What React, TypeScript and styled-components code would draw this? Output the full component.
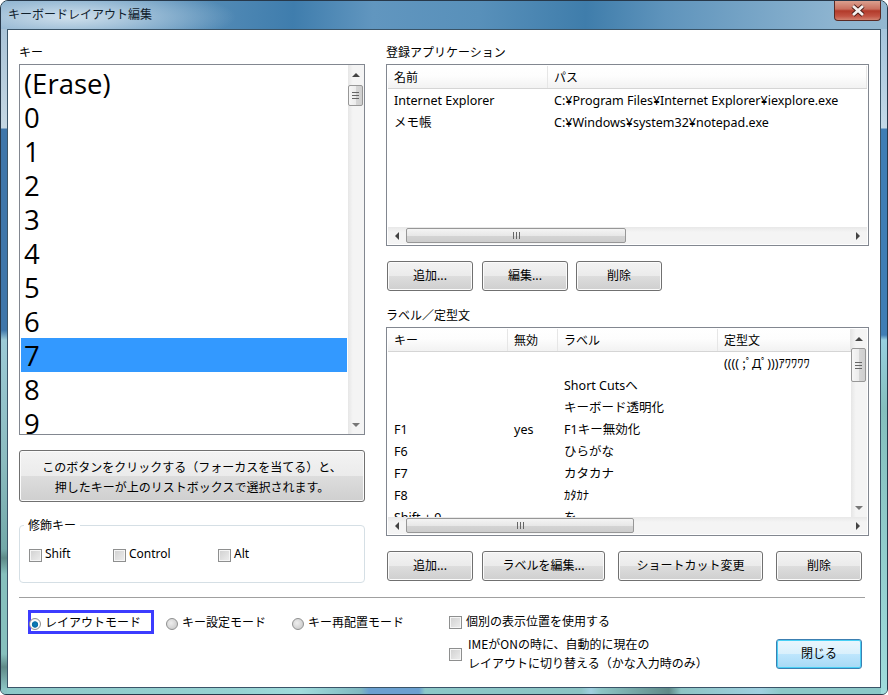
import * as React from 'react';
import styled, { createGlobalStyle, css } from 'styled-components';

const GlobalStyle = createGlobalStyle`
  html, body {
    margin: 0;
    padding: 0;
    background: #fff;
  }
  body {
    font-family: "Noto Sans", "Noto Sans CJK JP", sans-serif;
    font-size: 12px;
    color: #000;
  }
`;

const UI_FONT = `"Noto Sans CJK JP", "Noto Sans", sans-serif`;

const WindowFrame = styled.div`
  box-sizing: border-box;
  width: 888px;
  height: 695px;
  display: flex;
  flex-direction: column;
  overflow: hidden;
  border: 1px solid #27384a;
  border-radius: 8px 8px 6px 6px;
  background: #8cc8c8;
`;

const TitleBar = styled.div`
  flex: none;
  height: 28px;
  display: flex;
  align-items: flex-start;
  justify-content: space-between;
  background:
    radial-gradient(ellipse 165px 30px at 70px 16px, rgba(225, 236, 244, 0.85) 0%, rgba(175, 203, 224, 0.6) 55%, rgba(120, 165, 200, 0) 100%),
    linear-gradient(92deg, #7ea6c6 0%, #5f93bb 18%, #3f7dad 33%, #6196bf 42%, #5890ba 54%, #3f7dab 66%, #5f94bc 75%, #8db4d0 94%, #93b7d0 100%);
`;

const TitleText = styled.div`
  padding: 4px 0 0 7px;
  font-family: ${UI_FONT};
  font-size: 12px;
  line-height: 17px;
  color: #10202c;
`;

const CloseButton = styled.div`
  width: 47px;
  height: 20px;
  margin-right: 6px;
  box-sizing: border-box;
  display: flex;
  align-items: center;
  justify-content: center;
  border: 1px solid #5a2a24;
  border-top: none;
  border-radius: 0 0 4px 4px;
  background: linear-gradient(180deg, #dba08f 0%, #c9705f 42%, #b23a2a 52%, #c25444 80%, #d2826f 100%);
`;

const FrameBody = styled.div`
  flex: 1;
  display: flex;
  padding: 0 6px 6px;
  background:
    linear-gradient(180deg, #aac4d8 0, #c5d7e3 99px, #3f76aa 100px, #3f76aa 301px, #9ccad6 311px, #8cbcc0 430px, #73a9a9 520px, #5d8a88 529px, #86c0bd 545px, #86c0bd 625px, #5f8a88 638px, #8cc4c4 660px) left top / 6px 100% no-repeat,
    linear-gradient(180deg, #a5c5dc 0, #c3d9e8 99px, #3f7db5 100px, #3f7db5 306px, #97cfe0 311px, #84bfbd 380px, #9fdbdc 665px) right top / 6px 100% no-repeat,
    linear-gradient(90deg, #8cc8c8 0, #96d2d2 230px, #a0dcdc 300px, #7fb8c0 360px, #6ba0d0 368px, #6ba0d0 418px, #8cc8c8 424px, #8cc4c4 580px, #a0cfe0 590px, #8cc4c4 600px, #5f8a88 668px, #8cc4c4 680px, #a0d0e0 760px, #8cc8c8 780px) left bottom / 100% 6px no-repeat;
`;

const Client = styled.div`
  flex: 1;
  box-sizing: border-box;
  padding: 0 11px;
  background: #fff;
  border: 1px solid #3a5468;
`;

const Columns = styled.div`
  display: grid;
  grid-template-columns: 346px 483px;
  column-gap: 21px;
`;

const Column = styled.div`
  display: flex;
  flex-direction: column;
`;

const FieldLabel = styled.div<{ $top?: number }>`
  margin-top: ${(p) => p.$top ?? 15}px;
  margin-bottom: 5px;
  font-family: ${UI_FONT};
  font-size: 12px;
  line-height: 14px;
  height: 14px;
`;

const KeyList = styled.div`
  box-sizing: border-box;
  height: 371px;
  display: flex;
  border: 1px solid #828790;
`;

const KeyItems = styled.div`
  flex: 1;
  min-width: 0;
  overflow: hidden;
  padding: 1px 1px 0 1px;
`;

const KeyItem = styled.div<{ $selected?: boolean }>`
  height: 34px;
  padding-left: 3px;
  font-family: "Open Sans", "Noto Sans", sans-serif;
  font-size: 27.5px;
  line-height: 36px;
  background: ${(p) => (p.$selected ? '#3399ff' : 'transparent')};
`;

const ScrollV = styled.div`
  flex: none;
  width: 16px;
  display: flex;
  flex-direction: column;
  background: linear-gradient(90deg, #e6e6e6 0%, #f4f4f4 30%, #f4f4f4 100%);
`;

const ScrollH = styled.div`
  flex: none;
  height: 17px;
  display: flex;
  align-items: stretch;
  background: linear-gradient(180deg, #e8e8e8 0%, #f4f4f4 30%, #f4f4f4 100%);
`;

const ScrollArrow = styled.div<{ $dir: 'up' | 'down' | 'left' | 'right' }>`
  flex: none;
  display: flex;
  align-items: center;
  justify-content: center;
  ${(p) => (p.$dir === 'up' || p.$dir === 'down' ? 'height: 19px;' : 'width: 18px;')}

  &::before {
    content: '';
    width: 0;
    height: 0;
    ${(p) =>
      p.$dir === 'up' &&
      css`
        border-left: 4px solid transparent;
        border-right: 4px solid transparent;
        border-bottom: 4px solid #444;
      `}
    ${(p) =>
      p.$dir === 'down' &&
      css`
        border-left: 4px solid transparent;
        border-right: 4px solid transparent;
        border-top: 4px solid #777;
      `}
    ${(p) =>
      p.$dir === 'left' &&
      css`
        border-top: 4px solid transparent;
        border-bottom: 4px solid transparent;
        border-right: 4px solid #444;
      `}
    ${(p) =>
      p.$dir === 'right' &&
      css`
        border-top: 4px solid transparent;
        border-bottom: 4px solid transparent;
        border-left: 4px solid #444;
      `}
  }
`;

const ScrollTrack = styled.div`
  flex: 1;
  min-width: 0;
  min-height: 0;
  display: flex;
`;

const ThumbOffsetV = styled.div<{ $offset: number }>`
  padding-top: ${(p) => p.$offset}px;
`;

const ThumbV = styled.div<{ $size: number }>`
  box-sizing: border-box;
  width: 15px;
  height: ${(p) => p.$size}px;
  display: flex;
  align-items: center;
  justify-content: center;
  border: 1px solid #979797;
  border-radius: 2px;
  background: linear-gradient(90deg, #f6f6f6 0%, #ececec 50%, #d6d6d6 52%, #cfcfcf 100%);
`;

const ThumbH = styled.div<{ $size: number }>`
  box-sizing: border-box;
  width: ${(p) => p.$size}px;
  margin: 1px 0;
  display: flex;
  align-items: center;
  justify-content: center;
  border: 1px solid #979797;
  border-radius: 2px;
  background: linear-gradient(180deg, #f4f4f4 0%, #e8e8e8 50%, #d4d4d4 52%, #cdcdcd 100%);
`;

const GripV = styled.div`
  width: 7px;
  height: 7px;
  background: repeating-linear-gradient(180deg, #666 0, #666 1px, transparent 1px, transparent 3px);
`;

const GripH = styled.div`
  width: 7px;
  height: 7px;
  background: repeating-linear-gradient(90deg, #666 0, #666 1px, transparent 1px, transparent 3px);
`;

const HintButton = styled.div`
  box-sizing: border-box;
  height: 52px;
  margin-top: 15px;
  padding-top: 1px;
  display: flex;
  flex-direction: column;
  align-items: center;
  justify-content: center;
  font-family: ${UI_FONT};
  font-size: 12px;
  line-height: 20px;
  border: 1px solid #707070;
  border-radius: 3px;
  background: linear-gradient(180deg, #f3f3f3 0%, #ebebeb 49%, #dddddd 50%, #cfcfcf 100%);
  box-shadow: inset 0 0 0 1px #fbfbfb;
`;

const GroupBox = styled.fieldset`
  box-sizing: border-box;
  height: 65px;
  margin: 16px 0 0 0;
  padding: 0 0 0 9px;
  border: 1px solid #d5dfe5;
  border-radius: 4px;
  min-width: 0;
`;

const GroupLegend = styled.legend`
  margin-left: -5px;
  padding: 0 4px;
  font-family: ${UI_FONT};
  font-size: 12px;
  line-height: 14px;
`;

const ModifierRow = styled.div`
  display: grid;
  grid-template-columns: 84px 105px 80px;
  padding-top: 14px;
`;

const CheckLabel = styled.label<{ $gap?: number }>`
  display: flex;
  align-items: center;
  gap: ${(p) => p.$gap ?? 4}px;
  font-family: "Noto Sans", "Noto Sans CJK JP", sans-serif;
  font-size: 12px;
  line-height: 16px;
`;

const CheckBox = styled.span`
  flex: none;
  box-sizing: border-box;
  width: 13px;
  height: 13px;
  margin-top: 2px;
  border: 1px solid #8e8f8f;
  background: linear-gradient(135deg, #d0d0d0 0%, #eeeeee 100%);
  box-shadow: inset 0 0 0 1px #f6f6f6;
`;

const ListView = styled.div<{ $height: number }>`
  box-sizing: border-box;
  height: ${(p) => p.$height}px;
  padding: 1px;
  display: flex;
  flex-direction: column;
  border: 1px solid #828790;
`;

const ListMain = styled.div`
  flex: 1;
  min-height: 0;
  display: flex;
`;

const ListBody = styled.div`
  flex: 1;
  min-width: 0;
  overflow: hidden;
`;

const ListHeader = styled.div`
  height: 22px;
  display: flex;
  border-bottom: 1px solid #d5d5d5;
  background: linear-gradient(180deg, #ffffff 0%, #fdfdfd 45%, #f2f2f2 100%);
`;

const HeaderCell = styled.div<{ $width?: number }>`
  box-sizing: border-box;
  ${(p) => (p.$width ? `width: ${p.$width}px; flex: none;` : 'flex: 1;')}
  padding-left: 6px;
  font-family: ${UI_FONT};
  font-size: 12px;
  line-height: 22px;
  border-right: 1px solid #e6e6e6;
`;

const ListRow = styled.div`
  height: 22px;
  display: flex;
`;

const RowCell = styled.div<{ $width?: number }>`
  box-sizing: border-box;
  ${(p) => (p.$width ? `width: ${p.$width}px; flex: none;` : 'flex: 1;')}
  padding-left: 6px;
  font-family: "Noto Sans", "Noto Sans CJK JP", sans-serif;
  font-size: 12.5px;
  line-height: 24px;
  white-space: nowrap;
`;

const ButtonRow = styled.div`
  display: flex;
  margin-top: 15px;
  padding-left: 1px;
`;

const PushButton = styled.div<{ $width: number; $gap?: number; $default?: boolean }>`
  box-sizing: border-box;
  flex: none;
  width: ${(p) => p.$width}px;
  height: 30px;
  margin-right: ${(p) => p.$gap ?? 0}px;
  padding-bottom: 2px;
  display: flex;
  align-items: center;
  justify-content: center;
  font-family: ${UI_FONT};
  font-size: 12px;
  line-height: 14px;
  border-radius: 3px;
  ${(p) =>
    p.$default
      ? css`
          border: 1px solid #3c7fb1;
          background: linear-gradient(180deg, #eaf6fd 0%, #d9f0fc 49%, #bee6fd 50%, #a7d9f5 100%);
          box-shadow: inset 0 0 0 1px #48d0f5;
        `
      : css`
          border: 1px solid #707070;
          background: linear-gradient(180deg, #f3f3f3 0%, #ebebeb 49%, #dddddd 50%, #cfcfcf 100%);
          box-shadow: inset 0 0 0 1px #fbfbfb;
        `}
`;

const Separator = styled.div`
  width: 846px;
  height: 1px;
  margin-top: 14px;
  background: #a0a0a0;
`;

const Footer = styled.div`
  display: flex;
  align-items: flex-start;
  margin-top: 12px;
  padding-left: 9px;
`;

const RadioItem = styled.label<{ $width: number; $focused?: boolean }>`
  box-sizing: border-box;
  flex: none;
  width: ${(p) => p.$width}px;
  height: 24px;
  margin-right: 12px;
  padding-bottom: 1px;
  display: flex;
  align-items: center;
  gap: 4px;
  font-family: ${UI_FONT};
  font-size: 12px;
  ${(p) => p.$focused && 'border: 3px solid #3c3cff;'}
`;

const RadioDot = styled.span<{ $checked?: boolean; $inset?: boolean }>`
  flex: none;
  box-sizing: border-box;
  width: 12px;
  height: 12px;
  margin-top: 4px;
  margin-left: ${(p) => (p.$inset ? -2 : 0)}px;
  border-radius: 50%;
  border: 1px solid #8e8f8f;
  background: ${(p) =>
    p.$checked
      ? 'radial-gradient(circle at 50% 55%, #0a7db8 0%, #0a6ea6 38%, #ffffff 48%, #e4e4e4 100%)'
      : 'radial-gradient(circle at 40% 40%, #eeeeee 0%, #d0d0d0 70%, #e8e8e8 100%)'};
`;

const OptionColumn = styled.div`
  flex: none;
  width: 327px;
  margin-left: 7px;
  display: flex;
  flex-direction: column;
  padding-top: 3px;
`;

const ImeOption = styled(CheckLabel)`
  margin-top: 5px;
  font-family: ${UI_FONT};
  line-height: 19px;
`;

const OptionText = styled.div`
  font-family: ${UI_FONT};
`;

const CloseRow = styled.div`
  flex: none;
  padding-top: 29px;
`;

const Line = styled.div``;

const CloseGlyph = () => (
  <svg width="18" height="13" viewBox="0 0 18 13">
    <path d="M4 2 L14 11 M14 2 L4 11" fill="none" stroke="#4a1d18" strokeWidth="4.6" />
    <path d="M4 2 L14 11 M14 2 L4 11" fill="none" stroke="#f4f0ee" strokeWidth="2.8" />
  </svg>
);

const VScroll = ({ thumbTop, thumbSize }: { thumbTop: number; thumbSize: number }) => (
  <ScrollV>
    <ScrollArrow $dir="up" />
    <ScrollTrack>
      <ThumbOffsetV $offset={thumbTop}>
        <ThumbV $size={thumbSize}>
          <GripV />
        </ThumbV>
      </ThumbOffsetV>
    </ScrollTrack>
    <ScrollArrow $dir="down" />
  </ScrollV>
);

const HScroll = ({ thumbSize }: { thumbSize: number }) => (
  <ScrollH>
    <ScrollArrow $dir="left" />
    <ScrollTrack>
      <ThumbH $size={thumbSize}>
        <GripH />
      </ThumbH>
    </ScrollTrack>
    <ScrollArrow $dir="right" />
  </ScrollH>
);

const keys = ['(Erase)', '0', '1', '2', '3', '4', '5', '6', '7', '8', '9'];

const appRows = [
  ['Internet Explorer', 'C:¥Program Files¥Internet Explorer¥iexplore.exe'],
  ['メモ帳', 'C:¥Windows¥system32¥notepad.exe'],
];

const labelRows = [
  ['', '', '', '(((( ;ﾟДﾟ)))ｱﾜﾜﾜﾜ'],
  ['', '', 'Short Cutsへ', ''],
  ['', '', 'キーボード透明化', ''],
  ['F1', 'yes', 'F1キー無効化', ''],
  ['F6', '', 'ひらがな', ''],
  ['F7', '', 'カタカナ', ''],
  ['F8', '', 'ｶﾀｶﾅ', ''],
  ['Shift + 9', '', 'を', ''],
];

const appWidths = [160, 0];
const labelWidths = [120, 50, 160, 0];

export default function App() {
  return (
    <>
      <GlobalStyle />
      <WindowFrame>
        <TitleBar>
          <TitleText>キーボードレイアウト編集</TitleText>
          <CloseButton>
            <CloseGlyph />
          </CloseButton>
        </TitleBar>
        <FrameBody>
          <Client>
            <Columns>
              <Column>
                <FieldLabel>キー</FieldLabel>
                <KeyList>
                  <KeyItems>
                    {keys.map((k) => (
                      <KeyItem key={k} $selected={k === '7'}>
                        {k}
                      </KeyItem>
                    ))}
                  </KeyItems>
                  <VScroll thumbTop={1} thumbSize={21} />
                </KeyList>
                <HintButton>
                  <Line>このボタンをクリックする（フォーカスを当てる）と、</Line>
                  <Line>押したキーが上のリストボックスで選択されます。</Line>
                </HintButton>
                <GroupBox>
                  <GroupLegend>修飾キー</GroupLegend>
                  <ModifierRow>
                    <CheckLabel $gap={3}>
                      <CheckBox />
                      Shift
                    </CheckLabel>
                    <CheckLabel $gap={3}>
                      <CheckBox />
                      Control
                    </CheckLabel>
                    <CheckLabel $gap={3}>
                      <CheckBox />
                      Alt
                    </CheckLabel>
                  </ModifierRow>
                </GroupBox>
              </Column>
              <Column>
                <FieldLabel>登録アプリケーション</FieldLabel>
                <ListView $height={182}>
                  <ListMain>
                    <ListBody>
                      <ListHeader>
                        <HeaderCell $width={appWidths[0]}>名前</HeaderCell>
                        <HeaderCell>パス</HeaderCell>
                      </ListHeader>
                      {appRows.map((row) => (
                        <ListRow key={row[0]}>
                          {row.map((cell, i) => (
                            <RowCell key={i} $width={appWidths[i]}>
                              {cell}
                            </RowCell>
                          ))}
                        </ListRow>
                      ))}
                    </ListBody>
                  </ListMain>
                  <HScroll thumbSize={220} />
                </ListView>
                <ButtonRow>
                  <PushButton $width={86} $gap={9}>追加...</PushButton>
                  <PushButton $width={86} $gap={8}>編集...</PushButton>
                  <PushButton $width={86}>削除</PushButton>
                </ButtonRow>
                <FieldLabel $top={17}>ラベル／定型文</FieldLabel>
                <ListView $height={209}>
                  <ListMain>
                    <ListBody>
                      <ListHeader>
                        <HeaderCell $width={labelWidths[0]}>キー</HeaderCell>
                        <HeaderCell $width={labelWidths[1]}>無効</HeaderCell>
                        <HeaderCell $width={labelWidths[2]}>ラベル</HeaderCell>
                        <HeaderCell>定型文</HeaderCell>
                      </ListHeader>
                      {labelRows.map((row, r) => (
                        <ListRow key={r}>
                          {row.map((cell, i) => (
                            <RowCell key={i} $width={labelWidths[i]}>
                              {cell}
                            </RowCell>
                          ))}
                        </ListRow>
                      ))}
                    </ListBody>
                    <VScroll thumbTop={0} thumbSize={34} />
                  </ListMain>
                  <HScroll thumbSize={228} />
                </ListView>
                <ButtonRow>
                  <PushButton $width={86} $gap={9}>追加...</PushButton>
                  <PushButton $width={123} $gap={13}>ラベルを編集...</PushButton>
                  <PushButton $width={145} $gap={13}>ショートカット変更</PushButton>
                  <PushButton $width={86}>削除</PushButton>
                </ButtonRow>
              </Column>
            </Columns>
            <Separator />
            <Footer>
              <RadioItem $width={126} $focused>
                <RadioDot $checked $inset />
                レイアウトモード
              </RadioItem>
              <RadioItem $width={114}>
                <RadioDot />
                キー設定モード
              </RadioItem>
              <RadioItem $width={138}>
                <RadioDot />
                キー再配置モード
              </RadioItem>
              <OptionColumn>
                <CheckLabel>
                  <CheckBox />
                  <OptionText>個別の表示位置を使用する</OptionText>
                </CheckLabel>
                <ImeOption $gap={6}>
                  <CheckBox />
                  <OptionText>
                    <Line>IMEがONの時に、自動的に現在の</Line>
                    <Line>レイアウトに切り替える（かな入力時のみ）</Line>
                  </OptionText>
                </ImeOption>
              </OptionColumn>
              <CloseRow>
                <PushButton $width={86} $default>閉じる</PushButton>
              </CloseRow>
            </Footer>
          </Client>
        </FrameBody>
      </WindowFrame>
    </>
  );
}
